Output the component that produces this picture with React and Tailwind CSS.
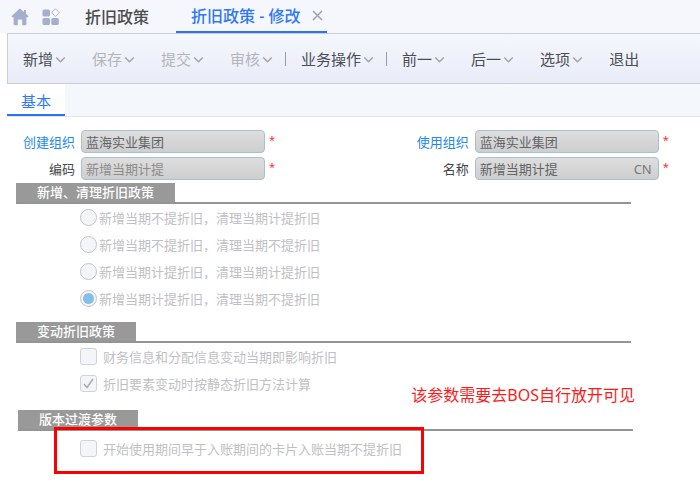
import React, { useState } from "react";

const policies = [
  "新增当期不提折旧，清理当期计提折旧",
  "新增当期不提折旧，清理当期不提折旧",
  "新增当期计提折旧，清理当期计提折旧",
  "新增当期计提折旧，清理当期不提折旧",
];

function HomeIcon() {
  return (
    <svg width="18" height="18" viewBox="0 0 18 18" fill="#a3afcb">
      <path d="M9 0.5 L13 4 V2 H15 V5.8 L17.3 8 Q17.8 9 16.8 9.2 H15.4 V16 Q15.4 17.3 14.1 17.3 H11.2 V12.6 Q11.2 11.6 10.2 11.6 H7.8 Q6.8 11.6 6.8 12.6 V17.3 H3.9 Q2.6 17.3 2.6 16 V9.2 H1.2 Q0.2 9 0.7 8 L8.2 0.9 Q9 0.3 9.8 0.9 Z" />
    </svg>
  );
}

function AppsIcon() {
  return (
    <svg width="18" height="18" viewBox="0 0 18 18" fill="#a3afcb">
      <rect x="0.5" y="1.5" width="7.5" height="7" rx="1.5" />
      <rect x="0.5" y="10" width="7.5" height="7" rx="1.5" />
      <rect x="9.3" y="10" width="7.5" height="7" rx="1.5" />
      <path d="M13.5 0.8 L17.3 4.6 L13.5 8.4 L9.7 4.6 Z" fill="#fff" stroke="#a3afcb" strokeWidth="1" />
    </svg>
  );
}

function ToolButton({ text, disabled, menu = true }) {
  return (
    <button
      disabled={disabled}
      className="flex items-center gap-0.5 whitespace-nowrap text-[15px] text-[#4a4d55] disabled:text-[#b4b5ba]"
    >
      {text}
      {menu && (
        <svg width="11" height="8" viewBox="0 0 11 8" fill="none" stroke="#a2a4aa" strokeWidth="1.5">
          <path d="M1.2 2.5 L5.5 6.7 L9.8 2.5" />
        </svg>
      )}
    </button>
  );
}

function Separator() {
  return <span className="ml-3 mr-[15px] h-3.5 w-px bg-[#9a9ca3]" />;
}

function Field({ id, label, value, link, muted, suffix }) {
  return (
    <div className="flex items-center gap-1.5">
      <label
        htmlFor={id}
        className={`w-13 shrink-0 text-right ${link ? "text-[#2489e8]" : "text-[#45474b]"}`}
      >
        {label}
      </label>
      <div className="flex h-[23px] w-46 items-center rounded border border-[#a9c0d2] bg-gradient-to-b from-[#dedede] to-[#cecece] px-1">
        <input
          id={id}
          defaultValue={value}
          disabled
          className={`w-full min-w-0 bg-transparent ${muted ? "text-[#8c8c8c]" : "text-[#626467]"}`}
        />
        {suffix && <span className="pr-0.5 text-[#77797c]">{suffix}</span>}
      </div>
      <span className="-ml-0.5 self-start text-[11px] leading-5 text-[#ff3030]">*</span>
    </div>
  );
}

function SectionTitle({ children }) {
  return (
    <div className="border-b-2 border-[#949494]">
      <h2 className="h-[19px] w-max bg-[#999] px-[21px] font-medium leading-[19px] text-white">
        {children}
      </h2>
    </div>
  );
}

function CheckRow({ label, checked }) {
  return (
    <label className="flex h-[27px] w-max items-center gap-1.5 text-[#bfc0c5]">
      <span className="relative h-[17px] w-[17px]">
        <input
          type="checkbox"
          defaultChecked={checked}
          disabled
          className="block h-[17px] w-[17px] appearance-none rounded-[3px] border border-[#d2d3d6] bg-[#f4f5f8]"
        />
        {checked && (
          <svg
            className="absolute inset-0"
            width="17"
            height="17"
            viewBox="0 0 17 17"
            fill="none"
            stroke="#a9aaae"
            strokeWidth="1.5"
          >
            <path d="M4 9 L7 12.5 L13 4" />
          </svg>
        )}
      </span>
      {label}
    </label>
  );
}

function App() {
  const [policy, setPolicy] = useState(3);

  return (
    <div className="min-h-screen w-full overflow-x-hidden bg-white font-['Noto_Sans','Noto_Sans_CJK_SC',sans-serif] text-[13px] leading-5">
      {/* Window tabs */}
      <header className="flex h-[33px] items-stretch bg-[#f5f7fc] pl-[11px]">
        <button aria-label="Home">
          <HomeIcon />
        </button>
        <button aria-label="Apps" className="ml-[13px]">
          <AppsIcon />
        </button>
        <a href="#list" className="ml-[25px] flex items-center text-base font-medium text-[#4c4c4c]">
          折旧政策
        </a>
        <div className="ml-[27px] flex items-center gap-3 border-b-2 border-[#2b74f5] pl-[15px] pr-1">
          <a href="#edit" className="text-base font-medium text-[#2f78f5]">
            折旧政策 - 修改
          </a>
          <button aria-label="Close">
            <svg width="11" height="11" viewBox="0 0 11 11" stroke="#98a2b3" strokeWidth="1.5">
              <path d="M1 1 L10 10 M10 1 L1 10" />
            </svg>
          </button>
        </div>
      </header>

      {/* Toolbar */}
      <div className="ml-[7px] flex h-[51px] items-center border border-r-0 border-[#cdced3] bg-gradient-to-b from-[#f5f7fd] to-[#e9ecf8] pl-[15px]">
        <div className="flex gap-[26px]">
          <ToolButton text="新增" />
          <ToolButton text="保存" disabled />
          <ToolButton text="提交" disabled />
          <ToolButton text="审核" disabled />
        </div>
        <Separator />
        <ToolButton text="业务操作" />
        <Separator />
        <div className="flex gap-[26px]">
          <ToolButton text="前一" />
          <ToolButton text="后一" />
          <ToolButton text="选项" />
          <ToolButton text="退出" menu={false} />
        </div>
      </div>

      {/* Page tabs */}
      <nav className="ml-[7px] flex h-[33px] border-b border-[#e1e4ea] bg-[#f4f7fc]">
        <a
          href="#basic"
          className="flex items-center border-b-2 border-[#2b74f5] bg-white px-3.5 pt-1 text-[15px] text-[#2f78f5]"
        >
          基本
        </a>
      </nav>

      <form>
        <div className="grid grid-cols-[7fr_5fr] gap-y-1 pl-[23px] pr-0.5 pt-[13px]">
          <Field id="createOrg" label="创建组织" value="蓝海实业集团" link />
          <Field id="useOrg" label="使用组织" value="蓝海实业集团" link />
          <Field id="code" label="编码" value="新增当期计提" muted />
          <Field id="name" label="名称" value="新增当期计提" suffix="CN" />
        </div>

        <section className="ml-4 mr-[69px] mt-[3px]">
          <SectionTitle>新增、清理折旧政策</SectionTitle>
          <div className="pl-16">
            {policies.map((text, i) => (
              <label key={i} className="flex h-[27px] w-max items-center gap-0.5 text-[#bfc0c5]">
                <span className="flex h-[17px] w-[17px] items-center justify-center rounded-full border border-[#c4c5c8] bg-[#f4f5f8]">
                  <input
                    type="radio"
                    name="policy"
                    checked={policy === i}
                    onChange={() => setPolicy(i)}
                    disabled
                    className="h-[11px] w-[11px] appearance-none rounded-full checked:bg-[#83bfe6]"
                  />
                </span>
                {text}
              </label>
            ))}
          </div>
        </section>

        <section className="relative ml-4 mr-[69px] mt-2.5">
          <SectionTitle>变动折旧政策</SectionTitle>
          <div className="pl-16">
            <CheckRow label="财务信息和分配信息变动当期即影响折旧" />
            <CheckRow label="折旧要素变动时按静态折旧方法计算" checked />
          </div>
          <p className="absolute -bottom-2 -right-1 whitespace-nowrap text-base leading-5 text-[#ff1a1a]">
            该参数需要去BOS自行放开可见
          </p>
        </section>

        <section className="ml-[18px] mr-[67px] mt-[13px]">
          <SectionTitle>版本过渡参数</SectionTitle>
          <div className="pl-[62px] pt-1">
            <div className="relative w-max">
              <CheckRow label="开始使用期间早于入账期间的卡片入账当期不提折旧" />
              <span className="pointer-events-none absolute -bottom-3 -left-[26px] -right-[22px] -top-2 border-3 border-[#fb0000]" />
            </div>
          </div>
        </section>
      </form>
    </div>
  );
}

export default App;
